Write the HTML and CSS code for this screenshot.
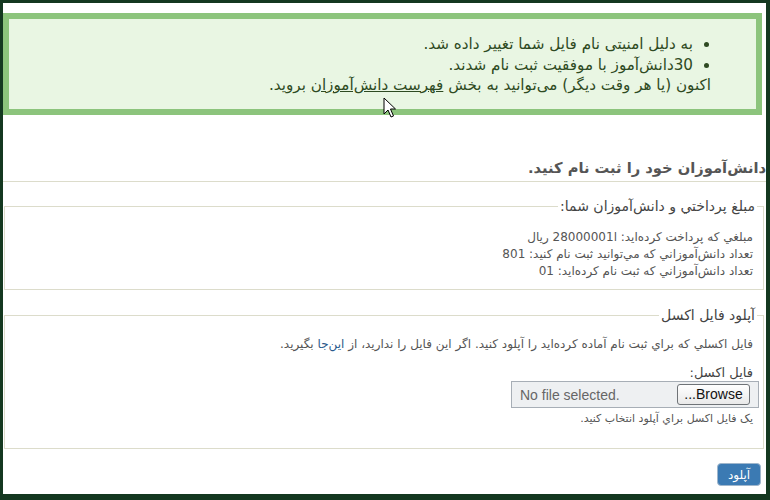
FILE: index.html
```html
<!DOCTYPE html>
<html lang="fa" dir="rtl">
<head>
    <meta charset="UTF-8">
    <title>ثبت نام دانش‌آموزان</title>
    <link rel="stylesheet" href="styles.css">
</head>
<body>
<div class="page">

    <div class="message">
        <ul>
            <li>به دلیل امنیتی نام فایل شما تغییر داده شد.</li>
            <li>30دانش‌آموز با موفقیت ثبت نام شدند.</li>
        </ul>
        <p>اکنون (یا هر وقت دیگر) می‌توانید به بخش <a href="#">فهرست دانش‌آموزان</a> بروید.</p>
    </div>

    <h2 class="title">دانش‌آموزان خود را ثبت نام کنید.</h2>

    <fieldset class="box box-info">
        <legend>مبلغ پرداختي و دانش‌آموزان شما:</legend>
        <div class="row">مبلغي كه پرداخت كرده‌ايد: ا28000001 ريال</div>
        <div class="row">تعداد دانش‌آموزاني كه مي‌توانيد ثبت نام كنيد: 801</div>
        <div class="row">تعداد دانش‌آموزاني كه ثبت نام كرده‌ايد: 01</div>
    </fieldset>

    <fieldset class="box box-upload">
        <legend>آپلود فايل اكسل</legend>
        <div class="row">فايل اكسلي كه براي ثبت نام آماده كرده‌ايد را آپلود كنيد. اگر اين فايل را نداريد، از <a href="#" class="blue">اين‌جا</a> بگيريد.</div>
        <label class="field-label">فايل اكسل:</label>
        <div class="file-box">
            <span class="file-btn">Browse...</span>
            <span class="file-name">No file selected.</span>
        </div>
        <div class="hint">يک فايل اکسل براي آپلود انتخاب کنيد.</div>
    </fieldset>

    <div class="actions">
        <button class="submit">آپلود</button>
    </div>

    <svg class="cursor" width="14" height="22" viewBox="0 0 14 22">
        <path d="M1 1 L1 17 L5 13 L8 20 L10.5 19 L7.5 12 L12.5 12 Z" fill="#fff" stroke="#000" stroke-width="1"/>
    </svg>
</div>
</body>
</html>
```

FILE: styles.css
```css
body {
    margin: 0;
    background-color: #143820;
    font-family: "DejaVu Sans", sans-serif;
}
.page {
    position: relative;
    margin: 3px 4px 0 3px;
    height: 491px;
    background-color: #fff;
    overflow: hidden;
}
.message {
    margin: 10px 4px 0 0;
    height: 90px;
    border: 6px solid #8cc47c;
    background-color: #e9f6e3;
    color: #2e4a22;
    font-size: 15.2px;
    line-height: 20.5px;
    padding: 0 45px 0 10px;
}
.message ul {
    margin: 15px 0 0 0;
    padding: 0 18px 0 0;
}
.message p {
    margin: 0;
}
.message a {
    color: #2e4a22;
}
.title {
    margin: 41px 0 0 0;
    padding: 0 0 1px 0;
    font-size: 14.7px;
    line-height: 24px;
    color: #555;
    border-bottom: 1px solid #dcdccb;
}
.box {
    margin: 0 2px 0 1px;
    border: 1px solid #dcdccb;
    padding: 0 10px;
    color: #555;
    font-size: 12px;
}
.box legend {
    padding: 0 2px;
    margin-right: -4px;
    font-size: 14px;
    color: #444;
}
.box-info {
    margin-top: 16px;
    height: 90px;
}
.box-info .row {
    line-height: 17px;
}
.box-info .row:first-of-type {
    margin-top: 15px;
}
.box-upload {
    margin-top: 17px;
    height: 140px;
}
.box-upload .row {
    margin-top: 13px;
    line-height: 17px;
}
.blue {
    color: #2a5a8c;
    text-decoration: none;
}
.field-label {
    display: block;
    margin-top: 11px;
    font-size: 13px;
    line-height: 17px;
    color: #444;
}
.file-box {
    display: flex;
    align-items: center;
    justify-content: space-between;
    width: 230px;
    height: 25px;
    margin-right: -6px;
    padding: 0 8px;
    border: 1px solid #a7aeb6;
    background-color: #eef0f2;
}
.file-name {
    direction: ltr;
    font-family: "Liberation Sans", Arial, sans-serif;
    font-size: 14px;
    color: #666;
}
.file-btn {
    width: 71px;
    height: 19px;
    line-height: 19px;
    text-align: center;
    font-family: "Liberation Sans", Arial, sans-serif;
    font-size: 14px;
    color: #111;
    border: 1px solid #6f7377;
    border-radius: 3px;
    background: linear-gradient(#fff, #e9e9e9);
}
.hint {
    margin-top: 3px;
    font-size: 11px;
    line-height: 15px;
}
.actions {
    padding: 14px 5px 0 0;
}
.submit {
    font-family: "DejaVu Sans", sans-serif;
    font-size: 12px;
    color: #fff;
    width: 44px;
    height: 23px;
    padding: 0;
    border: 1px solid #9fb6cc;
    border-radius: 4px;
    background-color: #3b7ab3;
}
.cursor {
    position: absolute;
    left: 380px;
    top: 94px;
}
```
